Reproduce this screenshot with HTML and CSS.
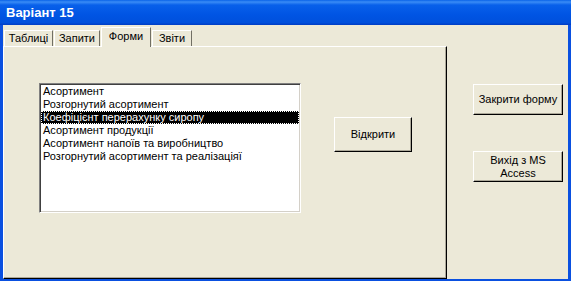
FILE: index.html
```html
<!DOCTYPE html>
<html>
<head>
<meta charset="utf-8">
<title>Варіант 15</title>
<link rel="stylesheet" href="styles.css">
</head>
<body>
<div class="window">
  <div class="titlebar">Варіант 15</div>
  <div class="client">
    <div class="tabctl">
      <div class="tabs">
        <div class="tab t1">Таблиці</div>
        <div class="tab t2">Запити</div>
        <div class="tab t3 active">Форми</div>
        <div class="tab t4">Звіти</div>
      </div>
      <div class="panel">
        <div class="listbox">
          <div class="item">Асортимент</div>
          <div class="item">Розгорнутий асортимент</div>
          <div class="item sel">Коефіцієнт перерахунку сиропу</div>
          <div class="item">Асортимент продукції</div>
          <div class="item">Асортимент напоїв та виробництво</div>
          <div class="item">Розгорнутий асортимент та реалізаціяї</div>
        </div>
        <div class="btn open">Відкрити</div>
      </div>
    </div>
    <div class="side">
      <div class="btn side-btn">Закрити форму</div>
      <div class="btn side-btn">Вихід з MS<br>Access</div>
    </div>
  </div>
</div>
</body>
</html>
```

FILE: styles.css
```css
body { margin: 0; font-family: "Liberation Sans", Arial, sans-serif; font-size: 11px; color: #000; }

.window { width: 571px; height: 281px; display: flex; flex-direction: column; }
.titlebar { height: 25px; line-height: 25px; padding-left: 6px; color: #fff; font-weight: bold; font-size: 13px;
  background: linear-gradient(to bottom, #0a63e8 0%, #3a8cf6 8%, #0860ea 20%, #0054e3 60%, #0050dc 90%, #003dc4 100%); }
.client { flex: 1; display: flex; background: #ece9d8; border: 3px solid #0a50e0; border-top: 0; border-bottom-width: 2px; }

.tabctl { width: 444px; display: flex; flex-direction: column; }
.tabs { height: 21px; display: flex; align-items: flex-end; padding-left: 1px; }
.tab { height: 15px; line-height: 15px; text-align: center; border: 1px solid; border-color: #fff #716f64 transparent #fff;
  border-bottom: 0; margin-right: 1px; }
.t1 { width: 47px; }
.t2 { width: 44px; }
.t3 { width: 48px; }
.t4 { width: 38px; }
.tab.active { height: 19px; line-height: 16px; margin-bottom: -1px; background: #ece9d8; position: relative; z-index: 1; }

.panel { flex: 1; display: flex; align-items: flex-start; gap: 33px; padding: 36px 0 0 35px;
  border: 1px solid; border-color: #fff #000 #000 #fff; box-shadow: inset -1px -1px #aca899; }

.listbox { width: 258px; height: 126px; background: #fff; border: 1px solid; border-color: #808080 #fff #fff #808080;
  box-shadow: inset 1px 1px #404040, inset -1px -1px #d4d0c8; padding: 1px; }
.item { height: 13px; line-height: 13px; padding-left: 2px; white-space: nowrap; }
.item.sel { background: #000; color: #fff; outline: 1px dotted #fff; outline-offset: -1px; }

.btn { display: flex; align-items: center; justify-content: center; text-align: center; background: #ece9d8;
  border: 1px solid; border-color: #fff #000 #000 #fff; box-shadow: inset -1px -1px #aca899; line-height: 13px; }
.open { width: 76px; height: 33px; margin-top: 34px; }

.side { flex: 1; display: flex; flex-direction: column; gap: 36px; padding: 59px 0 0 26px; }
.side-btn { width: 88px; height: 29px; }
```
